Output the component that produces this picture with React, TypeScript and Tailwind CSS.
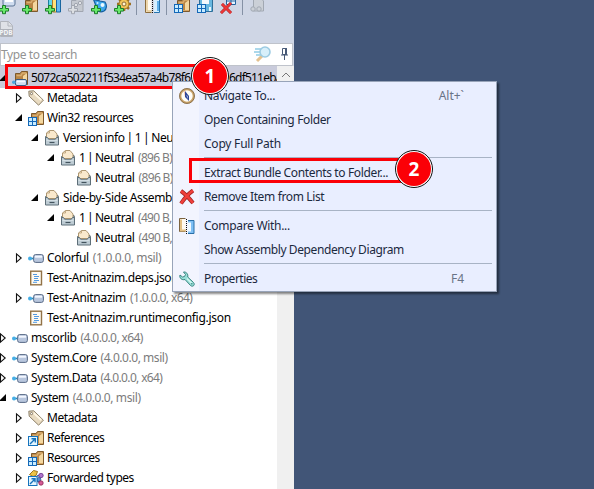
import React from "react";

type IconName = "tag" | "grid" | "box" | "asm" | "doc" | "ref" | "types" | "bundle";

function Folder() {
  return (
    <g>
      <path d="M3.5 14.5v-11H8l1.5-2h6v13z" fill="#b98546" stroke="#7d592c" />
      <path d="M4.5 5.5H9l1.5-2.5H14" fill="none" stroke="#d9ae70" strokeWidth="1.4" />
      <path d="M11 6l4-3v10l-4 1z" fill="#f4d79f" />
      <path d="M4 13.5h11" stroke="#d6a665" />
    </g>
  );
}

function Tiles() {
  return (
    <g>
      <rect x="0" y="7" width="9" height="9" fill="#1468b8" />
      <path d="M1 8h3v3H1zM5 8h3v3H5zM1 12h3v3H1zM5 12h3v3H5z" fill="#c8ecff" />
    </g>
  );
}

function TreeIcon({ name }: { name: IconName }) {
  return (
    <svg width="16" height="16" viewBox="0 0 16 16" className="shrink-0">
      {name === "tag" && (
        <g>
          <path d="M.8 1.2 5.7.8l9.7 9.4-4.8 5L1.2 6.2z" fill="#e9dbc1" stroke="#8c8069" />
          <path d="m5.8 3 7.4 7" stroke="#fff7e6" strokeWidth="1.8" />
          <circle cx="3.5" cy="3.6" r="1.1" fill="#fff" stroke="#74664f" strokeWidth=".8" />
        </g>
      )}
      {name === "grid" && <g><Folder /><Tiles /></g>}
      {name === "bundle" && (
        <g>
          <Folder />
          <rect x="3.5" y="9.5" width="11" height="6" rx="1.5" fill="#cfdcf0" stroke="#3b5c85" />
          <path d="M5 11.5h8" stroke="#f5f9ff" strokeWidth="1.4" />
          <circle cx="1.8" cy="12.3" r="1.8" fill="#4ba7df" />
        </g>
      )}
      {name === "box" && (
        <g>
          <path d="M1.500 14.500v-8l1.500-1h11l.500 1v8z" fill="#8797a1" stroke="#64757f" />
          <path d="M2.500 8.500V3l3-2.500H10l3 3.500v4.500z" fill="#f9e9cd" stroke="#a58d66" strokeWidth=".9" />
          <path d="M5.500.8V3h-3" fill="none" stroke="#b89d73" strokeWidth=".8" />
          <path d="M1.500 7.500h2l1.500 2.200h6l1.500-2.200h2v7.500h-13z" fill="#bdcbd3" stroke="#5d6e78" />
          <path d="M2.500 10.300h11" stroke="#dde7ec" />
          <path d="M5.500 12.500h5" stroke="#43535d" strokeWidth="1.200" />
        </g>
      )}
      {name === "asm" && (
        <g>
          <rect x="5.6" y="4.6" width="9.8" height="7.8" rx="2" fill="#b8c6dd" stroke="#596a86" />
          <path d="M7 6.7h7" stroke="#f3f7ff" strokeWidth="2" />
          <path d="M2 8.5h3.5" stroke="#3285b5" strokeWidth="1.6" />
          <circle cx="2" cy="8.5" r="2" fill="#45aee6" />
        </g>
      )}
      {name === "doc" && (
        <g>
          <rect x="2.7" y="1.2" width="10.8" height="13.6" fill="#fffaf0" stroke="#927348" strokeWidth="1.4" />
          <path d="M5 4.5h4M6 6.5h5M6 8.5h4M6 10.5h5M5 12.3h4" stroke="#3e8ee1" strokeWidth=".9" />
        </g>
      )}
      {name === "ref" && (
        <g>
          <Folder />
          <rect x=".5" y="6.5" width="9" height="9" fill="#e2f5ff" stroke="#1673bd" />
          <path d="m2 14 5-5M3.5 8.7h3.8v3.8" fill="none" stroke="#1673bd" strokeWidth="1.4" />
        </g>
      )}
      {name === "types" && (
        <g>
          <path d="m1.5 4.5 4-4 4 1-1.5 4-3 1z" fill="#edc447" stroke="#9d741d" />
          <path d="m9 6 4-1M9 11l4 2" stroke="#4369a8" strokeWidth="1.5" />
          <circle cx="13" cy="5.5" r="2.2" fill="#b073cc" stroke="#683287" strokeWidth=".8" />
          <circle cx="10.8" cy="9.5" r="2" fill="#568bd4" stroke="#29548c" strokeWidth=".8" />
          <circle cx="13" cy="13" r="2.2" fill="#d55c96" stroke="#8c2553" strokeWidth=".8" />
          <rect x=".5" y="6.5" width="8.5" height="9" fill="#e2f5ff" stroke="#1673bd" />
          <path d="m2 14 5-5M3.5 8.7H7v3.5" fill="none" stroke="#1673bd" strokeWidth="1.4" />
        </g>
      )}
    </svg>
  );
}

function Arrow({ open }: { open?: boolean }) {
  return (
    <svg width="8" height="10" viewBox="0 0 8 10" className="shrink-0 overflow-visible">
      {open ? <path d="M7 1v7H0z" fill="#050505" /> : <path d="M1.5.9v8.2L6.2 5z" fill="#fff" stroke="#111" strokeWidth="1.1" />}
    </svg>
  );
}

type Row = { pad: string; arrow?: "open" | "closed"; icon: IconName; text: string; meta?: string; track?: string; metaTrack?: string };

const pipes = "tracking-[-0.45px] [word-spacing:-1px]";
const bits = "tracking-[-0.65px]";

const rows: Row[] = [
  { pad: "pl-[15px]", arrow: "closed", icon: "tag", text: "Metadata", track: "tracking-[-0.45px]" },
  { pad: "pl-[15px]", arrow: "open", icon: "grid", text: "Win32 resources", track: "tracking-[-0.48px]" },
  { pad: "pl-[31px]", arrow: "open", icon: "box", text: "Version info | 1 | Neutral", track: "tracking-[-0.4px] [word-spacing:-0.8px]" },
  { pad: "pl-[47px]", arrow: "open", icon: "box", text: "1 | Neutral", meta: "(896 B)", track: pipes, metaTrack: bits },
  { pad: "pl-[63px]", icon: "box", text: "Neutral", meta: "(896 B)", metaTrack: bits },
  { pad: "pl-[31px]", arrow: "open", icon: "box", text: "Side-by-Side Assembly" },
  { pad: "pl-[47px]", arrow: "open", icon: "box", text: "1 | Neutral", meta: "(490 B,", track: pipes, metaTrack: bits },
  { pad: "pl-[63px]", icon: "box", text: "Neutral", meta: "(490 B,", metaTrack: bits },
  { pad: "pl-[15px]", arrow: "closed", icon: "asm", text: "Colorful", meta: "(1.0.0.0, msil)" },
  { pad: "pl-[15px]", icon: "doc", text: "Test-Anitnazim.deps.json" },
  { pad: "pl-[15px]", arrow: "closed", icon: "asm", text: "Test-Anitnazim", meta: "(1.0.0.0, x64)", track: "tracking-[-0.3px]", metaTrack: "tracking-[-0.6px]" },
  { pad: "pl-[15px]", icon: "doc", text: "Test-Anitnazim.runtimeconfig.json", track: "tracking-[-0.29px]" },
  { pad: "-ml-px", arrow: "closed", icon: "asm", text: "mscorlib", meta: "(4.0.0.0, x64)", metaTrack: "tracking-[-0.6px]" },
  { pad: "-ml-px", arrow: "closed", icon: "asm", text: "System.Core", meta: "(4.0.0.0, msil)", metaTrack: "tracking-[-0.45px]" },
  { pad: "-ml-px", arrow: "closed", icon: "asm", text: "System.Data", meta: "(4.0.0.0, x64)", track: "tracking-[-0.45px]", metaTrack: bits },
  { pad: "-ml-px", arrow: "open", icon: "asm", text: "System", meta: "(4.0.0.0, msil)", track: "tracking-[-0.5px]", metaTrack: "tracking-[-0.4px]" },
  { pad: "pl-[15px]", arrow: "closed", icon: "tag", text: "Metadata", track: "tracking-[-0.45px]" },
  { pad: "pl-[15px]", arrow: "closed", icon: "ref", text: "References", track: "tracking-[-0.5px]" },
  { pad: "pl-[15px]", arrow: "closed", icon: "grid", text: "Resources", track: "tracking-[-0.55px]" },
  { pad: "pl-[15px]", arrow: "closed", icon: "types", text: "Forwarded types", track: "tracking-[-0.5px]" },
];

function TreeRow({ row }: { row: Row }) {
  return (
    <div className={`flex h-5 shrink-0 items-center whitespace-pre ${row.pad}`}>
      <span className="flex w-[13px] shrink-0">{row.arrow && <Arrow open={row.arrow === "open"} />}</span>
      <TreeIcon name={row.icon} />
      <span className={`ml-[3px] text-black ${row.track ?? "tracking-[-0.38px]"}`}>{row.text}</span>
      {row.meta && <span className={`ml-1 text-[#7c7c7c] ${row.metaTrack ?? "tracking-[-0.35px]"}`}>{row.meta}</span>}
    </div>
  );
}

function Plus() {
  return <path d="M3.5 8.5h3v3h3v2.6h-3v2.6h-3v-2.6h-3v-2.6h3z" fill="#69ea6b" stroke="#1d7d2a" />;
}

function Toolbar() {
  return (
    <svg width="294" height="46" viewBox="0 0 294 46" className="shrink-0">
      <g>
        <rect x="3" y="-3" width="12" height="9" rx="2" fill="#d0ddf0" stroke="#5d7595" />
        <path d="M5 1h8" stroke="#fff" strokeWidth="2" />
        <g transform="translate(-1 -3)"><Plus /></g>
      </g>
      <g transform="translate(22 -3)"><Folder /><Plus /></g>
      <g transform="translate(45 -3)">
        <path d="M3.500 0h4v14h-4z" fill="#62d5ec" stroke="#197f9d" />
        <path d="M7.500 0h4v15h-4z" fill="#ffe27a" stroke="#a97c2b" />
        <path d="M11.500 0h4v15h-4z" fill="#63b9f2" stroke="#1966a0" />
        <Plus />
      </g>
      <g transform="translate(68 -3)" fill="#c5c9d0" stroke="#a1a6b0">
        <path d="M3.5 3.500H8l1-2h6v13H3.500z" /><circle cx="8" cy="8" r="1.700" fill="#e0e2e6" /><circle cx="12" cy="6" r="1.700" fill="#e0e2e6" /><path d="M3.5 8.500h3v3h3v2.600h-3v2.600h-3v-2.600h-3v-2.600h3z" fill="#dcdfe3" />
      </g>
      <g transform="translate(91 -3)">
        <path d="M2 1c2 3 5 2 7 3l5 1c2 3 2 7-1 9-4 2-8 0-8-5z" fill="#3ea7ec" stroke="#155e9f" strokeWidth="1.2" />
        <circle cx="11.500" cy="8" r="2" fill="#e9f9ff" /><circle cx="6.500" cy="6" r="1" fill="#c9edff" /><Plus />
      </g>
      <g transform="translate(114 -3)">
        <path d="M10 0v14M3 7h14M5 2l10 10M15 2 5 12" stroke="#9d7125" strokeWidth="2.500" />
        <circle cx="10" cy="7" r="5" fill="#f0c55a" stroke="#9d6e1b" /><circle cx="10" cy="7" r="2" fill="#fff4ce" stroke="#8e6c36" /><Plus />
      </g>
      <path d="M136.500 0v15M166.500 0v15M242.500 0v15" stroke="#8591a5" />
      <g transform="translate(145 -3)">
        <path d="M6.500 1.500h-6v14h6" fill="#fffaf0" stroke="#8d6d3c" /><path d="M2 2v12h5" fill="none" stroke="#e6c78f" strokeWidth="1.400" />
        <path d="M9 2.500h5.500v13H9" fill="#d5efff" stroke="#2874ae" /><path d="M13 4v10" stroke="#62b1ea" strokeWidth="2" /><path d="M7.500 1v15" stroke="#111" strokeDasharray="1 1" />
      </g>
      <g transform="translate(174 -3)"><Folder /><Tiles /></g>
      <g transform="translate(197 -3)"><path d="M2.500 1.500h13v13h-13z" fill="#68b7df" stroke="#2f6f99" /><path d="M5 1h7v6H5z" fill="#f4f8fc" /><path d="M12 10h2v4h-2z" fill="#e8f4fc" /><Tiles /></g>
      <g transform="translate(220 -3)"><path d="M6.500.500h9v7h-9z" fill="#e4f4ff" stroke="#24649f" /><path d="M11 0v8M6 4h9" stroke="#24649f" /><path d="m2 7 9 9M11 6 1 16" stroke="#a81f22" strokeWidth="3" /><path d="m2 7 9 9M11 6 1 16" stroke="#ee3838" strokeWidth="1.800" /></g>
      <g transform="translate(250 -3)" fill="#cbd0d7" stroke="#a1a8b2"><path d="M3.500 0h6l4 4v10h-10z" /><circle cx="3" cy="12" r="2.200" /><circle cx="9" cy="12" r="2.200" /></g>
      <path d="M.500 21.500h8l4 4v11H.500z" fill="#dfe2e7" stroke="#b1b5bc" />
      <path d="M8 21v5h4" fill="none" stroke="#b1b5bc" />
      <rect x="0" y="29" width="12" height="7" fill="#aeb2b9" /><text x="-.500" y="35.200" fontSize="6.500" fontWeight="700" fill="#f5f6f8">PDB</text>
    </svg>
  );
}

type MenuIconName = "compass" | "delete" | "compare" | "wrench";
function MenuIcon({ name }: { name: MenuIconName }) {
  return (
    <svg width="16" height="16" viewBox="0 0 16 16">
      {name === "compass" && (
        <g>
          <circle cx="8" cy="8" r="6.700" fill="#fffdf6" stroke="#c9a268" strokeWidth="2" />
          <circle cx="8" cy="8" r="7.500" fill="none" stroke="#7b6343" strokeWidth=".8" />
          <path d="M5.500 3 8 7l-2 2z" fill="#df5843" /><path d="m6 3 4 5v5L6 9z" fill="#2d4597" /><path d="m7 7 2 1v3z" fill="#98aae0" />
        </g>
      )}
      {name === "delete" && <g><path d="M2 2c3 2 8 7 12 12M14 1.500C9 5 5 10 2 14.500" fill="none" stroke="#a02525" strokeWidth="4" /><path d="M2 2c3 2 8 7 12 12M14 1.500C9 5 5 10 2 14.500" fill="none" stroke="#f0403a" strokeWidth="2.600" /></g>}
      {name === "compare" && (
        <g>
          <path d="M6.500.500h-6v13h6" fill="#fffaf0" stroke="#7d6440" /><path d="M2 1.500v11h5" fill="none" stroke="#e3c084" strokeWidth="2" />
          <path d="M9 2.500h6v13H9" fill="#7fc0f5" stroke="#2b70a8" /><path d="M9 4.500h3v9H9z" fill="#eff9ff" /><path d="M7.500 1v15" stroke="#111" strokeDasharray="1 1" />
        </g>
      )}
      {name === "wrench" && (
        <g><path d="M4.500 1 6.500 3.500l-1 2-2 .5L1 4C0 7 3 9.500 6 8.500l5.500 6c2.500 2 5-.8 3-3L8.700 6C9.500 3 7 .5 4.500 1z" fill="#98dfd8" stroke="#3a8581" /><path d="m8 7.500 5 5" stroke="#d5f9f2" strokeWidth="1.300" /><circle cx="12.800" cy="12.800" r=".7" fill="#347c79" /></g>
      )}
    </svg>
  );
}

function MenuItem({ label, icon, keyText, track = "tracking-[-0.36px]" }: { label: string; icon?: MenuIconName; keyText?: string; track?: string }) {
  return (
    <div className="flex h-6 shrink-0 items-center text-[#1b293e]">
      <span className="flex w-[31px] shrink-0 pl-[6px]">{icon && <MenuIcon name={icon} />}</span>
      <span className={`whitespace-nowrap ${track}`}>{label}</span>
      {keyText && <span className="ml-auto mr-[32px] text-[#697386]">{keyText}</span>}
    </div>
  );
}

function Rule() {
  return <div className="mb-[3px] ml-[31px] mr-1 mt-px h-px shrink-0 bg-[#a8b3c5]" />;
}

function Badge({ value }: { value: string }) {
  return (
    <div className="flex size-[38px] items-center justify-center rounded-full border border-[#111] bg-white p-px">
      <div className="flex size-full items-center justify-center rounded-full bg-[#fb0007] text-[19px] font-bold leading-none text-white">{value}</div>
    </div>
  );
}

export default function App() {
  return (
    <div className="relative flex h-[489px] w-[594px] overflow-hidden bg-[#415577] font-['Noto_Sans','Open_Sans',sans-serif] text-[12px] leading-5">
      <aside className="flex w-[294px] flex-col overflow-hidden bg-[#cfd6e5]">
        <Toolbar />
        <div className="-mt-[3px] flex h-[23px] w-[293px] shrink-0 items-center border border-[#bfc3cb] bg-white text-[#939393]">
          <span className="tracking-[-0.4px]">Type to search</span>
          <svg width="42" height="19" viewBox="0 0 42 19" className="ml-auto">
            <path d="m12 11-5 5" stroke="#e4c18f" strokeWidth="3" />
            <path d="M5 4h6M4 7h6M6 10h5" stroke="#91cbe5" strokeWidth="1.500" />
            <circle cx="15" cy="7" r="5" fill="#d7effa" stroke="#9ccbe2" strokeWidth="1.600" />
            <path d="M32.500 3.500h4v6h-4zM31 10h7M34.500 10v5" fill="none" stroke="#495b78" />
            <path d="M36 3v7" stroke="#495b78" strokeWidth="2" />
          </svg>
        </div>
        <div className="flex grow bg-white">
          <div className="flex w-[277px] flex-col overflow-hidden">
            <div className="-ml-px flex h-[22px] shrink-0 items-center bg-[#c9cbdb] pt-px whitespace-nowrap">
              <span className="flex w-[13px] shrink-0"><Arrow open /></span>
              <TreeIcon name="bundle" />
              <span className="ml-[3px] w-[198px] shrink-0 tracking-[-0.72px]">5072ca502211f534ea57a4b78f6</span>
              <span className="tracking-[-0.8px]">6df511eba</span>
            </div>
            {rows.map((row, index) => <TreeRow key={index} row={row} />)}
          </div>
          <div className="flex w-[17px] justify-center bg-[#f0f0f0] pt-[5px]"><svg width="10" height="8"><path d="m1 6 4-4 4 4" fill="none" stroke="#777" /></svg></div>
        </div>
      </aside>

      <div className="absolute left-[5px] top-[64px] h-[25px] w-[204px] border-[3px] border-[#fb0007]" />
      <div className="absolute left-[172px] top-[81px] flex h-[211px] w-[325px] flex-col border border-[#98a4b9] bg-[linear-gradient(90deg,#f2f4fe_26px,#e9eeff_26px)] pt-[2px] shadow-[2px_2px_2px_#0007]">
        <MenuItem label="Navigate To..." icon="compass" keyText="Alt+`" />
        <MenuItem label="Open Containing Folder" />
        <MenuItem label="Copy Full Path" track="tracking-[-0.22px]" />
        <Rule />
        <MenuItem label="Extract Bundle Contents to Folder..." />
        <MenuItem label="Remove Item from List" icon="delete" />
        <Rule />
        <MenuItem label="Compare With..." icon="compare" track="tracking-[-0.3px]" />
        <MenuItem label="Show Assembly Dependency Diagram" track="tracking-[-0.4px]" />
        <Rule />
        <MenuItem label="Properties" icon="wrench" keyText="F4" track="tracking-[-0.5px]" />
      </div>
      <div className="absolute left-[189px] top-[158px] h-[25px] w-[212px] border-[3px] border-[#fb0007]" />
      <div className="absolute left-[191px] top-[57px]"><Badge value="1" /></div>
      <div className="absolute left-[395px] top-[150px]"><Badge value="2" /></div>
    </div>
  );
}
